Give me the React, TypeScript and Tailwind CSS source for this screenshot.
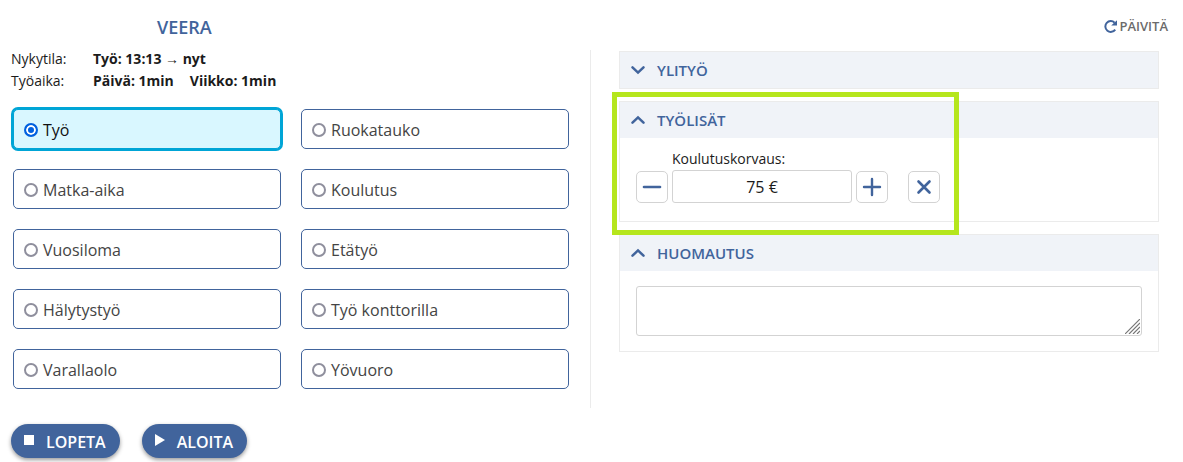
import { useState } from "react";
import type { ReactNode } from "react";

const activities = [
  "Työ",
  "Ruokatauko",
  "Matka-aika",
  "Koulutus",
  "Vuosiloma",
  "Etätyö",
  "Hälytystyö",
  "Työ konttorilla",
  "Varallaolo",
  "Yövuoro",
];

function RefreshIcon() {
  return (
    <svg viewBox="0 0 13 13" className="mb-px size-[13px]" aria-hidden="true">
      <path d="M11.2 9.6A5.4 5.4 0 1 1 10.6 2.7" fill="none" stroke="#41649c" strokeWidth="2" />
      <path d="M13 0.2V5.6H7.2Z" fill="#41649c" />
    </svg>
  );
}

function Chevron({ open }: { open: boolean }) {
  return (
    <svg viewBox="0 0 14 10" className="h-[10px] w-[14px]" aria-hidden="true">
      <path
        d={open ? "M1.5 7.7L7 2.4L12.5 7.7" : "M1.5 2.3L7 7.6L12.5 2.3"}
        fill="none"
        stroke="#41649c"
        strokeWidth="2.5"
        strokeLinecap="round"
      />
    </svg>
  );
}

function Panel({
  title,
  defaultOpen = false,
  highlighted = false,
  children,
}: {
  title: string;
  defaultOpen?: boolean;
  highlighted?: boolean;
  children?: ReactNode;
}) {
  const [open, setOpen] = useState(defaultOpen);
  return (
    <section className="relative border border-[#ebebeb]">
      <h2>
        <button
          type="button"
          aria-expanded={open}
          onClick={() => setOpen(!open)}
          className="flex h-9 w-full items-center gap-3 bg-[#f0f3f8] px-[11px] text-[15px] font-semibold text-[#41649c]"
        >
          <Chevron open={open} />
          {title}
        </button>
      </h2>
      {open && children}
      {highlighted && (
        <div className="pointer-events-none absolute -top-[10px] -bottom-[14px] -left-2 z-10 w-[347px] border-[5px] border-[#b5e61d]" />
      )}
    </section>
  );
}

function SquareButton({ label, path, width }: { label: string; path: string; width: string }) {
  return (
    <button
      type="button"
      aria-label={label}
      className="flex size-8 shrink-0 items-center justify-center rounded-[5px] border border-[#d3d3d3] bg-white"
    >
      <svg viewBox="0 0 20 20" className="size-5" aria-hidden="true">
        <path d={path} fill="none" stroke="#41649c" strokeWidth={width} strokeLinecap="round" />
      </svg>
    </button>
  );
}

export default function App() {
  const [selected, setSelected] = useState("Työ");
  return (
    <div className="bg-white pr-6 pl-[11px] font-['Open_Sans','Noto_Sans',sans-serif] text-[#1b1b1b]">
      <header className="-mr-[9px] flex h-[50px] items-center justify-between pt-1">
        <h1 className="pl-[146px] text-lg font-semibold text-[#41649c]">VEERA</h1>
        <button type="button" className="flex items-center gap-[2px] text-[13px] font-semibold text-[#6b6b6b]">
          <RefreshIcon />
          PÄIVITÄ
        </button>
      </header>

      <main className="grid grid-cols-[580fr_568fr]">
        <div className="border-r border-[#ebebeb] pb-[19px]">
          <dl className="-mt-[2px] grid grid-cols-[82px_1fr] text-sm leading-[22px]">
            <dt>Nykytila:</dt>
            <dd className="font-bold">
              Työ: 13:13 <span className="font-['Liberation_Sans',sans-serif]">→</span> nyt
            </dd>
            <dt>Työaika:</dt>
            <dd className="flex gap-4 font-bold">
              <span>Päivä: 1min</span>
              <span>Viikko: 1min</span>
            </dd>
          </dl>
          <div className="grid grid-cols-2 gap-5 pt-[17px] pr-[21px] pl-[2px]">
            {activities.map((name) => (
              <label
                key={name}
                className="flex h-10 items-center gap-[5px] rounded-[5px] border border-[#41649c] px-[10px] pt-[2px] text-base text-[#444444] has-checked:border-[#00a5d6] has-checked:bg-[#d9f7ff] has-checked:text-[#111111] has-checked:ring-2 has-checked:ring-[#00a5d6]"
              >
                <input
                  type="radio"
                  name="activity"
                  checked={selected === name}
                  onChange={() => setSelected(name)}
                  className="size-[14px] appearance-none rounded-full border-2 border-[#8f8f9d] bg-white checked:border-[#0060df] checked:bg-[#0060df] checked:shadow-[inset_0_0_0_2px_#ffffff]"
                />
                {name}
              </label>
            ))}
          </div>
        </div>

        <div className="flex flex-col gap-3 pt-px pl-7">
          <Panel title="YLITYÖ" />
          <Panel title="TYÖLISÄT" defaultOpen highlighted>
            <div className="px-4 pt-[11px] pb-[18px]">
              <label htmlFor="compensation" className="block pb-px pl-9 text-sm leading-5">
                Koulutuskorvaus:
              </label>
              <div className="flex items-center gap-1">
                <SquareButton label="Vähennä" path="M2 10H18" width="2.6" />
                <input
                  id="compensation"
                  type="text"
                  defaultValue="75 €"
                  className="h-[33px] w-[180px] rounded-[3px] border border-[#d3d3d3] text-center text-base"
                />
                <SquareButton label="Lisää" path="M2 10H18M10 2V18" width="2.4" />
                <div className="pl-4">
                  <SquareButton label="Poista" path="M4.5 4.5L15.5 15.5M15.5 4.5L4.5 15.5" width="2.6" />
                </div>
              </div>
            </div>
          </Panel>
          <Panel title="HUOMAUTUS" defaultOpen>
            <div className="px-4 py-[15px]">
              <div className="relative">
                <textarea
                  aria-label="Huomautus"
                  className="block h-[50px] w-full resize-none rounded-[3px] border border-[#d3d3d3] px-2 py-1"
                />
                <svg
                  viewBox="0 0 15 15"
                  className="pointer-events-none absolute right-[2px] bottom-[2px] size-[15px]"
                  aria-hidden="true"
                >
                  <path d="M0 15L15 0M4 15L15 4M8 15L15 8M12 15L15 12" stroke="#777777" strokeWidth="1.2" />
                </svg>
              </div>
            </div>
          </Panel>
        </div>
      </main>

      <footer className="flex gap-[22px] pt-4 pb-1">
        <button
          type="button"
          className="flex h-[34px] items-center gap-3 rounded-full bg-[#41649c] pt-[2px] pr-[14px] pl-[13px] text-base font-semibold text-white shadow-[0_2px_4px_rgba(0,0,0,0.4)]"
        >
          <svg viewBox="0 0 10 10" className="mb-1 size-[10px]" aria-hidden="true">
            <path d="M0 0H10V10H0Z" fill="white" />
          </svg>
          LOPETA
        </button>
        <button
          type="button"
          className="flex h-[34px] items-center gap-3 rounded-full bg-[#41649c] pt-[2px] pr-[14px] pl-[13px] text-base font-semibold text-white shadow-[0_2px_4px_rgba(0,0,0,0.4)]"
        >
          <svg viewBox="0 0 10 12" className="mb-1 h-3 w-[10px]" aria-hidden="true">
            <path d="M0 0L10 6L0 12Z" fill="white" />
          </svg>
          ALOITA
        </button>
      </footer>
    </div>
  );
}
